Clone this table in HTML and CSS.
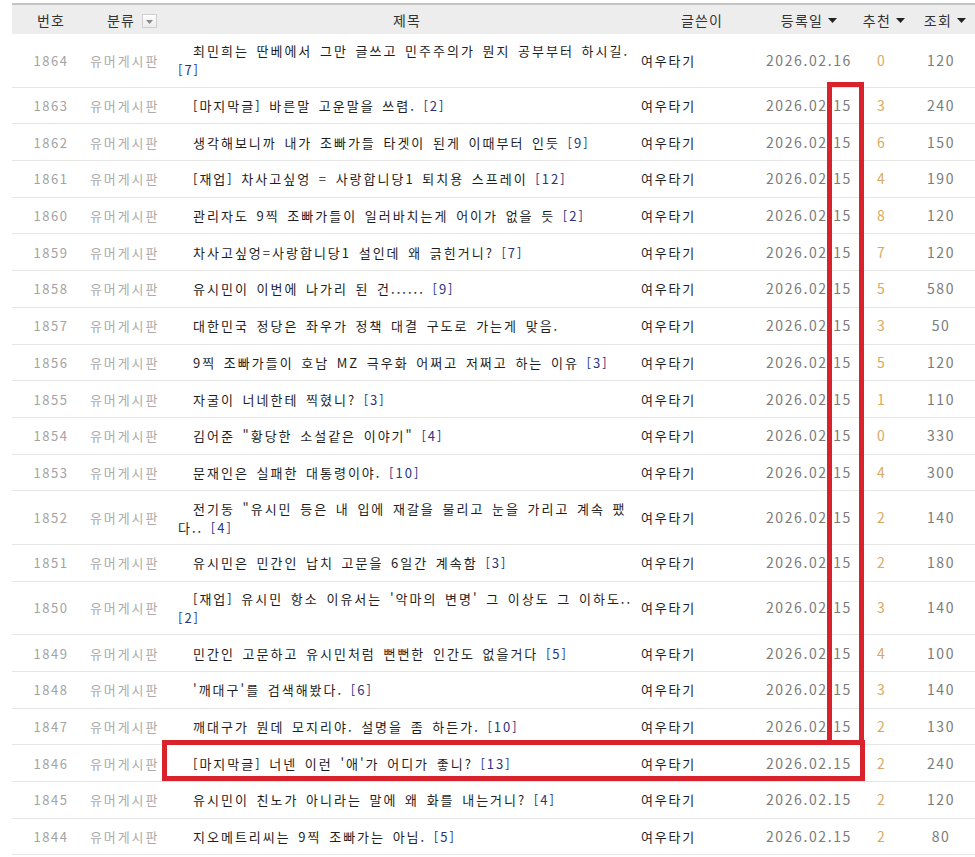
FILE: index.html
```html
<!DOCTYPE html>
<html lang="ko">
<head>
<meta charset="utf-8">
<title>유머게시판</title>
<link rel="stylesheet" href="styles.css">
</head>
<body>
<div class="page">
<table class="board">
<colgroup>
<col class="c-no"><col class="c-cat"><col class="c-title"><col class="c-author"><col class="c-date"><col class="c-rec"><col class="c-hit">
</colgroup>
<thead>
<tr>
<th class="h-no">번호</th>
<th class="h-cat">분류 <span class="dd"><svg width="7" height="4" viewBox="0 0 7 4"><path d="M0 0H7L3.5 4Z" fill="#8a8a8a"/></svg></span></th>
<th class="h-title">제목</th>
<th class="h-author">글쓴이</th>
<th class="h-date">등록일 <svg class="arr" width="9" height="5" viewBox="0 0 9 5"><path d="M0 0H9L4.5 5Z" fill="#222"/></svg></th>
<th class="h-rec">추천 <svg class="arr" width="9" height="5" viewBox="0 0 9 5"><path d="M0 0H9L4.5 5Z" fill="#222"/></svg></th>
<th class="h-hit">조회 <svg class="arr" width="9" height="5" viewBox="0 0 9 5"><path d="M0 0H9L4.5 5Z" fill="#222"/></svg></th>
</tr>
</thead>
<tbody>
<tr><td class="no">1864</td><td class="cat">유머게시판</td><td class="title two"><span class="ln">최민희는 딴베에서 그만 글쓰고 민주주의가 뭔지 공부부터 하시길.</span><br><span class="cmt">[7]</span></td><td class="author">여우타기</td><td class="date">2026.02.16</td><td class="rec">0</td><td class="hit">120</td></tr>
<tr><td class="no">1863</td><td class="cat">유머게시판</td><td class="title">[마지막글] 바른말 고운말을 쓰렴. <span class="cmt">[2]</span></td><td class="author">여우타기</td><td class="date">2026.02.15</td><td class="rec">3</td><td class="hit">240</td></tr>
<tr><td class="no">1862</td><td class="cat">유머게시판</td><td class="title">생각해보니까 내가 조빠가들 타겟이 된게 이때부터 인듯 <span class="cmt">[9]</span></td><td class="author">여우타기</td><td class="date">2026.02.15</td><td class="rec">6</td><td class="hit">150</td></tr>
<tr><td class="no">1861</td><td class="cat">유머게시판</td><td class="title">[재업] 차사고싶엉 = 사랑합니당1 퇴치용 스프레이 <span class="cmt">[12]</span></td><td class="author">여우타기</td><td class="date">2026.02.15</td><td class="rec">4</td><td class="hit">190</td></tr>
<tr><td class="no">1860</td><td class="cat">유머게시판</td><td class="title">관리자도 9찍 조빠가들이 일러바치는게 어이가 없을 듯 <span class="cmt">[2]</span></td><td class="author">여우타기</td><td class="date">2026.02.15</td><td class="rec">8</td><td class="hit">120</td></tr>
<tr><td class="no">1859</td><td class="cat">유머게시판</td><td class="title">차사고싶엉=사랑합니당1 설인데 왜 긁힌거니? <span class="cmt">[7]</span></td><td class="author">여우타기</td><td class="date">2026.02.15</td><td class="rec">7</td><td class="hit">120</td></tr>
<tr><td class="no">1858</td><td class="cat">유머게시판</td><td class="title">유시민이 이번에 나가리 된 건...... <span class="cmt">[9]</span></td><td class="author">여우타기</td><td class="date">2026.02.15</td><td class="rec">5</td><td class="hit">580</td></tr>
<tr><td class="no">1857</td><td class="cat">유머게시판</td><td class="title">대한민국 정당은 좌우가 정책 대결 구도로 가는게 맞음.</td><td class="author">여우타기</td><td class="date">2026.02.15</td><td class="rec">3</td><td class="hit">50</td></tr>
<tr><td class="no">1856</td><td class="cat">유머게시판</td><td class="title">9찍 조빠가들이 호남 MZ 극우화 어쩌고 저쩌고 하는 이유 <span class="cmt">[3]</span></td><td class="author">여우타기</td><td class="date">2026.02.15</td><td class="rec">5</td><td class="hit">120</td></tr>
<tr><td class="no">1855</td><td class="cat">유머게시판</td><td class="title">자굴이 너네한테 찍혔니? <span class="cmt">[3]</span></td><td class="author">여우타기</td><td class="date">2026.02.15</td><td class="rec">1</td><td class="hit">110</td></tr>
<tr><td class="no">1854</td><td class="cat">유머게시판</td><td class="title">김어준 "황당한 소설같은 이야기" <span class="cmt">[4]</span></td><td class="author">여우타기</td><td class="date">2026.02.15</td><td class="rec">0</td><td class="hit">330</td></tr>
<tr><td class="no">1853</td><td class="cat">유머게시판</td><td class="title">문재인은 실패한 대통령이야. <span class="cmt">[10]</span></td><td class="author">여우타기</td><td class="date">2026.02.15</td><td class="rec">4</td><td class="hit">300</td></tr>
<tr><td class="no">1852</td><td class="cat">유머게시판</td><td class="title two"><span class="ln">전기동 "유시민 등은 내 입에 재갈을 물리고 눈을 가리고 계속 팼</span><br>다.. <span class="cmt">[4]</span></td><td class="author">여우타기</td><td class="date">2026.02.15</td><td class="rec">2</td><td class="hit">140</td></tr>
<tr><td class="no">1851</td><td class="cat">유머게시판</td><td class="title">유시민은 민간인 납치 고문을 6일간 계속함 <span class="cmt">[3]</span></td><td class="author">여우타기</td><td class="date">2026.02.15</td><td class="rec">2</td><td class="hit">180</td></tr>
<tr><td class="no">1850</td><td class="cat">유머게시판</td><td class="title two"><span class="ln">[재업] 유시민 항소 이유서는 '악마의 변명' 그 이상도 그 이하도..</span><br><span class="cmt">[2]</span></td><td class="author">여우타기</td><td class="date">2026.02.15</td><td class="rec">3</td><td class="hit">140</td></tr>
<tr><td class="no">1849</td><td class="cat">유머게시판</td><td class="title">민간인 고문하고 유시민처럼 뻔뻔한 인간도 없을거다 <span class="cmt">[5]</span></td><td class="author">여우타기</td><td class="date">2026.02.15</td><td class="rec">4</td><td class="hit">100</td></tr>
<tr><td class="no">1848</td><td class="cat">유머게시판</td><td class="title">'깨대구'를 검색해봤다. <span class="cmt">[6]</span></td><td class="author">여우타기</td><td class="date">2026.02.15</td><td class="rec">3</td><td class="hit">140</td></tr>
<tr><td class="no">1847</td><td class="cat">유머게시판</td><td class="title">깨대구가 뭔데 모지리야. 설명을 좀 하든가. <span class="cmt">[10]</span></td><td class="author">여우타기</td><td class="date">2026.02.15</td><td class="rec">2</td><td class="hit">130</td></tr>
<tr><td class="no">1846</td><td class="cat">유머게시판</td><td class="title">[마지막글] 너넨 이런 '애'가 어디가 좋니? <span class="cmt">[13]</span></td><td class="author">여우타기</td><td class="date">2026.02.15</td><td class="rec">2</td><td class="hit">240</td></tr>
<tr><td class="no">1845</td><td class="cat">유머게시판</td><td class="title">유시민이 친노가 아니라는 말에 왜 화를 내는거니? <span class="cmt">[4]</span></td><td class="author">여우타기</td><td class="date">2026.02.15</td><td class="rec">2</td><td class="hit">120</td></tr>
<tr><td class="no">1844</td><td class="cat">유머게시판</td><td class="title">지오메트리씨는 9찍 조빠가는 아님. <span class="cmt">[5]</span></td><td class="author">여우타기</td><td class="date">2026.02.15</td><td class="rec">2</td><td class="hit">80</td></tr>
</tbody>
</table>
<div class="mark mark-col"></div>
<div class="mark mark-row"></div>
</div>
</body>
</html>
```
FILE: styles.css
```css
html, body {
  margin: 0;
  padding: 0;
  overflow: hidden;
  background: #fff;
}
body {
  font-family: "Noto Sans CJK KR", "Noto Sans", sans-serif;
  font-size: 13px;
  color: #222;
}
.page {
  position: relative;
  padding: 3px 0 0 12px;
}
.board {
  border-collapse: collapse;
  table-layout: fixed;
  width: 963px;
}
.c-no { width: 78px; }
.c-cat { width: 75px; }
.c-title { width: 476px; }
.c-author { width: 122px; }
.c-date { width: 92px; }
.c-rec { width: 52px; }
.c-hit { width: 68px; }

.board thead th {
  background: #ededed;
  border-top: 2px solid #c4c4c4;
  height: 29px;
  padding: 0;
  font-weight: normal;
  font-size: 14px;
  color: #333;
  letter-spacing: 1.2px;
  white-space: nowrap;
  text-align: center;
  vertical-align: middle;
}
.board th.h-cat { text-align: left; padding-left: 17px; }
.board th.h-title { padding-left: 8px; }
.board th.h-date { padding-left: 0; }
.board th.h-rec { padding-left: 6px; }
.board th.h-hit { padding-left: 8px; }
.arr { vertical-align: middle; margin-left: 0; position: relative; top: -1px; }
.dd {
  display: inline-block;
  width: 13px;
  height: 12px;
  border: 1px solid #cfcfcf;
  background: linear-gradient(#fdfdfd, #ececec);
  vertical-align: middle;
  position: relative;
  top: -1px;
  text-align: center;
  line-height: 10px;
  margin-left: 2px;
  letter-spacing: 0;
}
.dd svg { vertical-align: middle; }

.board tbody td {
  border-bottom: 1px solid #e6e6e6;
  padding: 9.35px 0;
  line-height: 17px;
  vertical-align: middle;
  white-space: nowrap;
}
.no { text-align: center; color: #a3a3a3; letter-spacing: 1.5px; }
.cat { color: #ababab; text-align: left; letter-spacing: 1.9px; }
.title {
  padding-left: 13px !important;
  text-indent: 15px;
  color: #1e1e1e;
  letter-spacing: 2px;
  word-spacing: 2px;
}
.board tbody td.two {
  line-height: 19px;
  padding-top: 7.35px;
  padding-bottom: 7.35px;
}
.cmt { color: #28357e; }
.author { color: #1e1e1e; letter-spacing: 1.8px; }
.date { text-align: center; color: #7b7b7b; font-size: 14px; letter-spacing: 1.6px; }
.rec { text-align: center; color: #d9a961; font-size: 14px; }
.hit { text-align: center; color: #7b7b7b; font-size: 14px; letter-spacing: 1.5px; }

.mark {
  position: absolute;
  border: 5px solid #d8232c;
  box-sizing: border-box;
}
.mark-col { left: 827px; top: 82px; width: 37px; height: 663px; }
.mark-row { left: 162px; top: 740px; width: 703px; height: 41px; }
```
